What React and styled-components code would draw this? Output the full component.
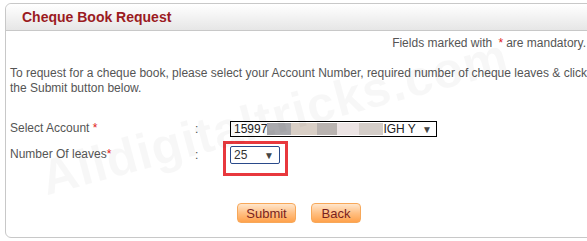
import React from "react";
import styled, { createGlobalStyle } from "styled-components";

const Global = createGlobalStyle`
  html, body { margin: 0; padding: 0; background: #fff; overflow: hidden; }
  body { font-family: Arial, "Liberation Sans", sans-serif; }
`;

const Page = styled.div`
  position: relative;
  width: 587px;
  height: 241px;
  overflow: hidden;
  padding: 3px 0 0 5px;
  box-sizing: border-box;
`;

const Panel = styled.div`
  width: 600px;
  height: 235px;
  border: 1px solid #c8c8c8;
  border-radius: 6px;
  box-sizing: border-box;
  display: flex;
  flex-direction: column;
  background: #fff;
`;

const Header = styled.div`
  height: 26px;
  display: flex;
  align-items: center;
  padding-left: 16px;
  background: linear-gradient(#ffffff, #e6e6e6);
  border-bottom: 1px solid #c8c8c8;
  border-radius: 6px 6px 0 0;
  font-size: 14px;
  font-weight: bold;
  color: #9b1b1f;
`;

const Body = styled.div`
  display: flex;
  flex-direction: column;
  font-size: 12px;
  color: #555;
  padding: 0 0 0 4px;
`;

const Notice = styled.div`
  width: 576px;
  text-align: right;
  margin-top: 5px;
  line-height: 14px;
  white-space: nowrap;
`;

const Star = styled.span`
  color: #e02020;
  margin: 0 ${(p) => (p.$gap ? "3px" : "0")};
`;

const Intro = styled.p`
  margin: 16px 0 0;
  width: 580px;
  line-height: 15px;
`;

const Form = styled.div`
  display: grid;
  grid-template-columns: 185px 35px auto;
  row-gap: 4px;
  margin-top: 25px;
  align-items: start;
`;

const Label = styled.div`
  line-height: 14px;
  padding-top: ${(p) => p.$top || 0}px;
`;

const Colon = styled.div`
  line-height: 14px;
  padding-top: ${(p) => (p.$top || 0) + 1}px;
`;

const AccountSelect = styled.div`
  width: 207px;
  height: 16px;
  border: 1px solid #000;
  box-sizing: border-box;
  display: flex;
  align-items: center;
  padding: 0 4px 0 3px;
  font-size: 12px;
  color: #222;
  white-space: nowrap;
  overflow: hidden;
`;

const Blur = styled.span`
  display: inline-block;
  flex: none;
  height: 12px;
  width: ${(p) => p.$w}px;
  background: ${(p) => p.$c};
`;

const Arrow = styled.span`
  margin-left: auto;
  font-size: 10px;
  color: #444;
  flex: none;
`;

const Highlight = styled.div`
  margin-left: -7px;
  width: 65px;
  height: 35px;
  border: 3px solid #e8383d;
  box-sizing: border-box;
  display: flex;
  align-items: flex-start;
  padding: 2px 0 0 4px;
`;

const LeavesSelect = styled.div`
  width: 50px;
  height: 18px;
  border: 1px solid #2a4a8a;
  border-radius: 2px;
  box-sizing: border-box;
  display: flex;
  align-items: center;
  padding: 0 5px 0 3px;
  font-size: 12px;
  color: #333;
`;

const Buttons = styled.div`
  display: flex;
  gap: 15px;
  margin: 27px 0 0 227px;
`;

const Button = styled.button`
  height: 20px;
  width: ${(p) => p.$w}px;
  padding: 0;
  border: 1px solid #f7a85a;
  border-radius: 4px;
  background: linear-gradient(#ffe6cc, #ffc084 50%, #ffa24c);
  color: #7a1f1f;
  font-family: Arial, "Liberation Sans", sans-serif;
  font-size: 13px;
`;

const Watermark = styled.div`
  position: absolute;
  left: 42px;
  top: 150px;
  font-size: 50px;
  font-weight: bold;
  color: rgba(0, 0, 0, 0.03);
  transform: rotate(-15deg);
  transform-origin: left center;
  white-space: nowrap;
  pointer-events: none;
  letter-spacing: 1px;
`;

export default function App() {
  return (
    <>
      <Global />
      <Page>
        <Panel>
          <Header>Cheque Book Request</Header>
          <Body>
            <Notice>
              Fields marked with <Star $gap>*</Star>are mandatory.
            </Notice>
            <Intro>
              To request for a cheque book, please select your Account Number, required number of cheque leaves &amp; click
              the Submit button below.
            </Intro>
            <Form>
              <Label>
                Select Account <Star>*</Star>
              </Label>
              <Colon>:</Colon>
              <AccountSelect>
                15997
                <Blur $w={24} $c="#a9a9ad" />
                <Blur $w={26} $c="#d9cfc6" />
                <Blur $w={20} $c="#b9b3b0" />
                <Blur $w={22} $c="#ece4e4" />
                <Blur $w={24} $c="#d4cdc8" />
                IGH Y
                <Arrow>▼</Arrow>
              </AccountSelect>
              <Label $top={6}>
                Number Of leaves<Star>*</Star>
              </Label>
              <Colon $top={6}>:</Colon>
              <Highlight>
                <LeavesSelect>
                  25
                  <Arrow>▼</Arrow>
                </LeavesSelect>
              </Highlight>
            </Form>
            <Buttons>
              <Button $w={59}>Submit</Button>
              <Button $w={50}>Back</Button>
            </Buttons>
          </Body>
        </Panel>
        <Watermark>Alldigitaltricks.com</Watermark>
      </Page>
    </>
  );
}
